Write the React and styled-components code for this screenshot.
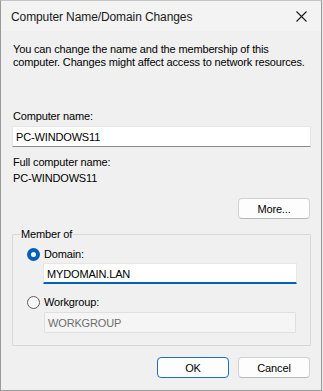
import React from "react";
import styled, { createGlobalStyle } from "styled-components";

const Global = createGlobalStyle`
  html, body { margin: 0; padding: 0; background: #e8e8e8; }
  body { font-family: "Liberation Sans", Arial, sans-serif; }
  * { box-sizing: border-box; }
`;

const Window = styled.div`
  width: 322px;
  height: 391px;
  background: #f0f0f0;
  border: 1px solid #9a9a9a;
  border-top-color: #c4c4c4;
  display: flex;
  flex-direction: column;
  font-family: "Liberation Sans", Arial, sans-serif;
  font-size: 11px;
  letter-spacing: -0.15px;
  color: #000;
`;

const TitleBar = styled.div`
  height: 30px;
  flex: none;
  background: #f3f3f3;
  display: flex;
  align-items: center;
  justify-content: space-between;
  padding: 1px 11px 0 10px;
`;

const Title = styled.span`
  font-size: 12px;
  letter-spacing: -0.1px;
  color: #1a1a1a;
`;

const CloseIcon = styled.svg`
  width: 11px;
  height: 11px;
  display: block;
  margin-right: 3px;
`;

const Body = styled.div`
  flex: 1;
  display: flex;
  flex-direction: column;
  padding: 12px 10px 12px 11px;
`;

const Text = styled.div`
  line-height: ${(p) => p.$lh || 14}px;
  margin-top: ${(p) => p.$mt || 0}px;
  padding-left: ${(p) => p.$pl || 0}px;
  color: ${(p) => p.$color || "#000"};
  white-space: pre-line;
`;

const Input = styled.div`
  height: 21px;
  margin-top: ${(p) => p.$mt || 0}px;
  margin-left: ${(p) => p.$ml || 0}px;
  margin-right: ${(p) => p.$mr || 0}px;
  background: ${(p) => (p.$disabled ? "#f5f5f5" : "#ffffff")};
  border: 1px solid ${(p) => (p.$disabled ? "#e0e0e0" : "#e6e6e6")};
  border-bottom: ${(p) =>
    p.$focused ? "2px solid #005fb8" : p.$disabled ? "1px solid #e0e0e0" : "1px solid #8a8a8a"};
  border-radius: 1px;
  display: flex;
  align-items: center;
  padding: ${(p) => (p.$focused ? "1px 0 0 3px" : "0 0 0 3px")};
  color: ${(p) => (p.$disabled ? "#6d6d6d" : "#000")};
`;

const ButtonRow = styled.div`
  display: flex;
  justify-content: flex-end;
  gap: 9px;
  margin-top: ${(p) => p.$mt || 0}px;
  padding-right: 1px;
`;

const Button = styled.div`
  width: 72px;
  height: 21px;
  background: #fdfdfd;
  border: 1px solid ${(p) => (p.$default ? "#1f6fc0" : "#d0d0d0")};
  border-bottom-color: ${(p) => (p.$default ? "#1f6fc0" : "#b8b8b8")};
  border-radius: 4px;
  display: flex;
  align-items: center;
  justify-content: center;
  color: #000;
`;

const GroupBox = styled.fieldset`
  margin: 8px 0 0 0;
  padding: 6px 13px 12px 14px;
  border: 1px solid #d8d8d8;
  border-radius: 1px;
  min-width: 0;
  display: flex;
  flex-direction: column;
`;

const Legend = styled.legend`
  padding: 0 1px;
  margin-left: -7px;
  line-height: 14px;
`;

const RadioRow = styled.div`
  display: flex;
  align-items: center;
  gap: 4px;
  height: 14px;
  margin-top: ${(p) => p.$mt || 0}px;
`;

const RadioCircle = styled.span`
  width: 13px;
  height: 13px;
  border-radius: 50%;
  flex: none;
  display: flex;
  align-items: center;
  justify-content: center;
  background: ${(p) => (p.$checked ? "#005fb8" : "#f7f7f7")};
  border: ${(p) => (p.$checked ? "none" : "1px solid #5c5c5c")};
  &::after {
    content: "";
    display: ${(p) => (p.$checked ? "block" : "none")};
    width: 5px;
    height: 5px;
    border-radius: 50%;
    background: #fff;
  }
`;

export default function App() {
  return (
    <>
      <Global />
      <Window>
        <TitleBar>
          <Title>Computer Name/Domain Changes</Title>
          <CloseIcon viewBox="0 0 11 11">
            <path d="M0.5 0.5 L10.5 10.5 M10.5 0.5 L0.5 10.5" stroke="#1a1a1a" strokeWidth="1.1" fill="none" />
          </CloseIcon>
        </TitleBar>
        <Body>
          <Text $lh={13} $pl={1}>
            {"You can change the name and the membership of this\ncomputer. Changes might affect access to network resources."}
          </Text>
          <Text $mt={40} $pl={1}>Computer name:</Text>
          <Input $mt={3}>PC-WINDOWS11</Input>
          <Text $mt={8} $pl={1}>Full computer name:</Text>
          <Text $mt={2} $pl={1}>PC-WINDOWS11</Text>
          <ButtonRow $mt={13}>
            <Button>More...</Button>
          </ButtonRow>
          <GroupBox>
            <Legend>Member of</Legend>
            <RadioRow $mt={0}>
              <RadioCircle $checked />
              <span>Domain:</span>
            </RadioRow>
            <Input $mt={2} $ml={16} $focused>MYDOMAIN.LAN</Input>
            <RadioRow $mt={11}>
              <RadioCircle />
              <span>Workgroup:</span>
            </RadioRow>
            <Input $mt={3} $ml={17} $mr={1} $disabled>WORKGROUP</Input>
          </GroupBox>
          <ButtonRow $mt={11}>
            <Button $default>OK</Button>
            <Button>Cancel</Button>
          </ButtonRow>
        </Body>
      </Window>
    </>
  );
}
